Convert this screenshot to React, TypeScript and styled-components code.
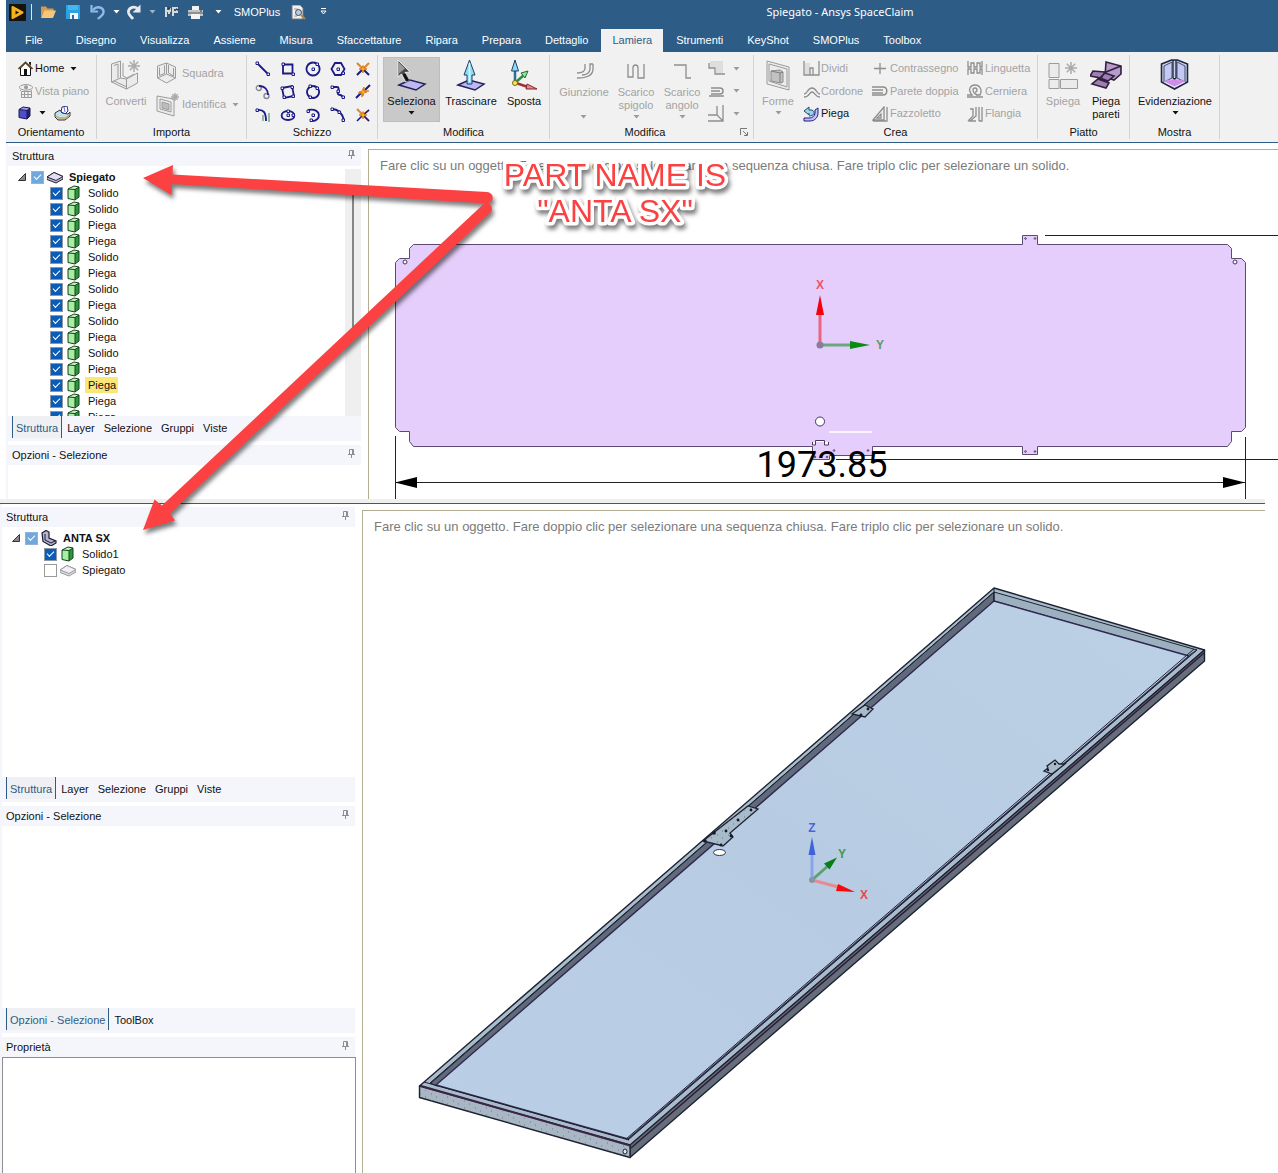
import React from 'react';
import styled, { createGlobalStyle, css } from 'styled-components';

const c = {
  blue: '#2d5c87',
  ribbon: '#f1f1f1',
  band: '#f5f6fc',
  off: '#a3a3a3',
  rule: '#b3ae90',
  navy: '#1c1a86',
};

const GlobalStyle = createGlobalStyle`
  *, *::before, *::after { box-sizing: border-box; }
  body { margin: 0; background: #fff; }
  button { font: inherit; color: inherit; background: none; border: 0; padding: 0; margin: 0; }
  svg { display: block; flex: none; }
`;

/* ---------- frame ---------- */

const Page = styled.div`
  position: relative;
  display: flex;
  flex-direction: column;
  min-height: 100vh;
  overflow: hidden;
  font-family: 'Liberation Sans', Arial, sans-serif;
  font-size: 11px;
  line-height: 13px;
  color: #111;
`;

const TopWindow = styled.section`
  margin-left: 6px;
`;

const BottomWindow = styled.section`
  flex: 1;
  display: flex;
  margin-right: 13px;
  border-top: 1px solid ${c.blue};
`;

const Seam = styled.div`
  height: 4px;
  margin-right: 13px;
  background: #efeff0;
`;

const Body = styled.div`
  display: flex;
  flex: 1;
  min-width: 0;
`;

/* ---------- title bar ---------- */

const TitleBar = styled.header`
  display: flex;
  align-items: center;
  height: 24px;
  background: ${c.blue};
  color: #fff;
`;

const QuickButton = styled.button<{ $w: number }>`
  display: flex;
  align-items: center;
  justify-content: center;
  flex: none;
  width: ${(p) => p.$w}px;
  height: 24px;
`;

const QuickRule = styled.span`
  flex: none;
  width: 1px;
  height: 16px;
  margin: 0 4px 0 3px;
  background: #dfe8f0;
`;

const Title = styled.h1`
  flex: 1;
  margin: 0;
  padding-left: 68px;
  text-align: center;
  font: 400 11px/16px 'Noto Sans', sans-serif;
`;

const TabRow = styled.nav`
  display: flex;
  padding: 5px 0 0 8px;
  background: ${c.blue};
`;

const RibbonTab = styled.button<{ $active?: boolean; $first?: boolean }>`
  height: 23px;
  padding: 0 11px;
  margin-right: ${(p) => (p.$first ? 11 : 2)}px;
  color: ${(p) => (p.$active ? c.blue : '#fff')};
  background: ${(p) => (p.$active ? c.ribbon : 'transparent')};
`;

/* ---------- ribbon ---------- */

const Ribbon = styled.div`
  display: flex;
  padding: 3px 0;
  background: ${c.ribbon};
  border-bottom: 1px solid ${c.blue};
  height: 91px;
`;

const Group = styled.section<{ $w: number }>`
  display: flex;
  flex-direction: column;
  flex: none;
  width: ${(p) => p.$w}px;
  border-right: 1px solid #d2d2d2;
`;

const GroupBody = styled.div<{ $pad?: number }>`
  display: flex;
  height: 70px;
  padding: 2px 0 0 ${(p) => p.$pad ?? 0}px;
`;

const GroupLabel = styled.div`
  display: flex;
  align-items: center;
  height: 14px;
`;

const GroupName = styled.span`
  flex: 1;
  text-align: center;
`;

const Launcher = styled.button`
  margin-right: 5px;
`;

const Tool = styled.button<{ $w: number; $on?: boolean; $off?: boolean; $small?: boolean }>`
  display: flex;
  flex-direction: column;
  align-items: center;
  flex: none;
  width: ${(p) => p.$w}px;
  height: 65px;
  padding-top: 2px;
  gap: ${(p) => (p.$small ? 3 : 4)}px;
  color: ${(p) => (p.$off ? c.off : '#111')};
  ${(p) => p.$on && css`background: #c9c9c9; outline: 1px solid #bdbdbd; outline-offset: -1px;`}
`;

const ToolText = styled.span<{ $small?: boolean }>`
  display: flex;
  flex-direction: column;
  align-items: center;
  min-height: ${(p) => (p.$small ? 26 : 13)}px;
`;

const ToolStack = styled.span`
  display: flex;
  flex-direction: column;
  align-items: center;
  gap: 3px;
`;

const Column = styled.div<{ $w?: number; $lead?: number }>`
  display: flex;
  flex-direction: column;
  flex: none;
  width: ${(p) => (p.$w ? p.$w + 'px' : 'auto')};
  padding-left: ${(p) => p.$lead ?? 0}px;
`;

const RowTool = styled.button<{ $h: number; $off?: boolean; $gap?: number }>`
  display: flex;
  align-items: center;
  gap: ${(p) => p.$gap ?? 2}px;
  height: ${(p) => p.$h}px;
  color: ${(p) => (p.$off ? c.off : '#111')};
  white-space: nowrap;
`;

const CaretSpace = styled.span`
  display: flex;
  margin-left: 4px;
`;

const Pair = styled.div`
  display: flex;
  align-items: center;
  gap: 8px;
`;

const SketchGrid = styled.div`
  display: grid;
  grid-template-columns: repeat(5, 25px);
  grid-auto-rows: 23px;
`;

const SketchButton = styled.button`
  display: grid;
  place-items: center;
`;

/* ---------- side panels ---------- */

const Side = styled.aside`
  display: flex;
  flex-direction: column;
  flex: none;
  width: 355px;
  padding-top: 3px;
  border-left: 2px solid #f5f6fc;
  margin-right: 7px;
`;

const PanelHead = styled.div`
  display: flex;
  align-items: center;
  justify-content: space-between;
  flex: none;
  height: 20px;
  padding: 0 6px 0 4px;
  background: ${c.band};
`;

const PanelName = styled.h2`
  margin: 0;
  font: inherit;
`;

const PinButton = styled.button`
  padding-bottom: 3px;
`;

const TreeArea = styled.div`
  display: flex;
  flex: none;
  height: 250px;
  padding-top: 3px;
  overflow: hidden;
`;

const TreeList = styled.ul`
  flex: 1;
  margin: 0;
  padding: 0;
  list-style: none;
  overflow: hidden;
`;

const TreeRow = styled.li<{ $root?: boolean }>`
  display: flex;
  align-items: center;
  height: 16px;
  padding-left: ${(p) => (p.$root ? 10 : 42)}px;
`;

const Toggle = styled.button`
  width: 13px;
`;

const NodeLabel = styled.label<{ $root?: boolean; $hot?: boolean }>`
  display: flex;
  align-items: center;
  gap: 3px;
  font-weight: ${(p) => (p.$root ? 700 : 400)};
`;

const NodeText = styled.span<{ $hot?: boolean }>`
  padding: 2px 2px 1px 3px;
  background: ${(p) => (p.$hot ? '#fbe67a' : 'transparent')};
`;

const Tick = styled.input<{ $soft?: boolean }>`
  appearance: none;
  display: grid;
  place-items: center;
  width: 13px;
  height: 13px;
  margin: 0;
  border: 1px solid #9a9a9a;
  background: #fff;
  &:checked {
    background: ${(p) => (p.$soft ? '#6fa8dc' : '#0b5cb8')};
    border-color: ${(p) => (p.$soft ? '#8fb4d6' : '#8a98a8')};
  }
  &:checked::after {
    content: '';
    width: 7px;
    height: 4px;
    margin-bottom: 2px;
    border: solid #fff;
    border-width: 0 0 1px 1px;
    transform: rotate(-45deg);
  }
`;

const ScrollTrack = styled.div`
  flex: none;
  width: 16px;
  padding: 24px 7px 0;
  background: #efefef;
`;

const ScrollThumb = styled.div`
  height: 136px;
  background: #868686;
`;

const TabStrip = styled.div`
  display: flex;
  flex: none;
  height: 25px;
  margin-bottom: 4px;
  padding: 0 0 3px 4px;
  background: ${c.band};
`;

const PanelTab = styled.button<{ $active?: boolean }>`
  padding: 2px 4px 0 5px;
  ${(p) =>
    p.$active &&
    css`
      color: ${c.blue};
      background: #eff0f3;
      padding: 2px 3px 0;
      border: solid ${c.blue};
      border-width: 0 1px;
    `}
`;

const PanelSpace = styled.div<{ $h: number }>`
  flex: none;
  height: ${(p) => p.$h}px;
`;

const PropertyBox = styled.div`
  flex: 1;
  margin-right: -1px;
  border: 1px solid #8e8e8e;
  border-bottom: 0;
`;

/* ---------- viewports ---------- */

const Viewport = styled.main`
  display: grid;
  flex: 1;
  min-width: 0;
  margin-top: 6px;
  overflow: hidden;
  border-left: 1px solid ${c.rule};
  border-top: 1px solid ${c.rule};
  & > * { grid-area: 1 / 1; }
`;

const Hint = styled.p`
  margin: 0;
  padding: 8px 11px;
  font-size: 13px;
  line-height: 15px;
  color: #7b7b7b;
  white-space: nowrap;
`;

const Annotation = styled.svg`
  position: absolute;
  left: 0;
  top: 0;
  pointer-events: none;
  filter: drop-shadow(2px 4px 2px rgba(0, 0, 0, 0.5));
`;

/* ---------- icons ---------- */

type IconProps = { w?: number; h?: number; box?: string; children: React.ReactNode };
const Icon = ({ w = 16, h = w, box, children }: IconProps) => (
  <svg width={w} height={h} viewBox={box ?? `0 0 ${w} ${h}`} fill="none" aria-hidden="true">
    {children}
  </svg>
);

const Caret = ({ color = '#111' }: { color?: string }) => (
  <Icon w={7} h={4}><path d="M.5 0h6l-3 3.5z" fill={color} /></Icon>
);

const gray = '#9b9b9b';

const Logo = () => (
  <Icon w={17} h={18}>
    <path d="M0 1h17v17H0z" fill="#17130b" />
    <path d="M3.500 4l10 5.500-10 5.500z" fill="#f6b21b" stroke="#f6b21b" strokeWidth="2" strokeLinejoin="round" />
    <path d="M6.500 7.500l3.500 2-3.500 2z" fill="#17130b" />
  </Icon>
);
const Folder = () => (
  <Icon w={16} h={14}>
    <path d="M1 12V1.500h5l1.500 2h6V6H4z" fill="#d89a45" />
    <path d="M4 5.500h12L13 13H1z" fill="#f7c57c" />
  </Icon>
);
const Save = () => (
  <Icon w={14}>
    <path d="M0 0h14v14H0z" fill="#2aa3e4" />
    <path d="M2 0h10v5H2z" fill="#45b6ee" /><path d="M4 8h8v6H4z" fill="#f4f8fb" /><path d="M6 10h2v4H6z" fill="#2a6fa5" />
  </Icon>
);
const Undo = () => (
  <Icon w={16}>
    <path d="M3 6C7 1 14 3.500 13.500 8.500 13 12 10 12.500 8 15" stroke="#8fb9ec" strokeWidth="2.400" />
    <path d="M1.500 1v6.500H8" stroke="#8fb9ec" strokeWidth="2.200" />
  </Icon>
);
const Redo = () => (
  <Icon w={16}>
    <path d="M12 5C8 1.500 2 3.500 2.500 8.500 3 11.500 5 12.500 7 15" stroke="#e8eaec" strokeWidth="2.800" />
    <path d="M14.500 .5v8h-8z" fill="#e8eaec" />
  </Icon>
);
const Connect = () => (
  <Icon w={15} h={14}>
    <path d="M2 2v10M2 6h4V3M5 6v3M9 11V3h4v4H9" stroke="#d8d8d8" strokeWidth="2" />
    <path d="M4 3l2 1M12 4l2 1" stroke="#333" strokeWidth="1.400" />
  </Icon>
);
const Printer = () => (
  <Icon w={15} h={15}>
    <path d="M4 1h7v5H4z" fill="#f2f2f2" /><path d="M0 5h15v6H0z" fill="#c2c5c8" /><path d="M0 7h15v2H0z" fill="#8c9094" />
    <path d="M3 9h9v5H3z" fill="#f4f4f4" /><path d="M12 6h2" stroke="#333" />
  </Icon>
);
const DocSearch = () => (
  <Icon w={15} h={15}>
    <path d="M1 0h8l3 3v11H1z" fill="#f1f1f1" stroke="#777" />
    <path d="M3 4h4M3 11h3" stroke="#999" />
    <circle cx="7.500" cy="7.500" r="3" fill="#b5cde6" stroke="#44484d" /><path d="M10 10l4 4" stroke="#b8843a" strokeWidth="2" />
  </Icon>
);
const More = () => (
  <Icon w={7} h={8}><path d="M1 .5h5" stroke="#fff" /><path d="M1 3h5L3.500 6z" stroke="#fff" /></Icon>
);
const House = () => (
  <Icon w={15}>
    <path d="M2.500 7v7.500h10V7l-5-5z" fill="#fff" stroke="#111" /><path d="M.5 8L7.500 1.300 14.500 8" stroke="#5d4420" strokeWidth="1.600" />
    <path d="M11 1h2v4l-2-2z" fill="#222" /><path d="M6 8h3v6H6z" fill="#111" />
  </Icon>
);
const PlanView = () => (
  <Icon w={16}>
    <path d="M1 4.500C4 .5 12 .5 15 4.500 12 8 4 8 1 4.500z" stroke={gray} /><circle cx="8" cy="4.300" r="2" fill={gray} />
    <path d="M3.500 8.500h10v6h-10zM3.500 11.500h10M6.500 8.500v6M10 8.500v6M2 7l1 1M14 7l-1 1" stroke={gray} />
  </Icon>
);
const BlueCube = () => (
  <Icon w={13} h={14}>
    <path d="M1 3.500L5 1l7 1-3 2.500z" fill="#9c9be8" /><path d="M1 3.500l8 1V13l-8-1.500z" fill="#4f4dc8" /><path d="M9 4.500L12 2v8l-3 3z" fill="#24226f" />
    <path d="M1 3.500L5 1l7 1v8l-3 3-8-1.500zM1 3.500l8 1L12 2M9 4.500V13" stroke="#1a1859" />
  </Icon>
);
const Orbit = () => (
  <Icon w={17} h={15}>
    <path d="M7 6L8 1l5-1 1 5-3 3z" fill="#fff" stroke="#31318c" /><path d="M10 1l1 5" stroke="#6a6ad0" />
    <path d="M1 7l5-3 2 3 6 1 2-2v4l-5 4H4l-3-3z" fill="#bfe3ef" stroke="#334" /><path d="M2 10l3 2h7l3-3" stroke="#d8a050" strokeWidth="1.300" />
  </Icon>
);
const Burst = ({ x, y, s = 6 }: { x: number; y: number; s?: number }) => (
  <path
    d={`M${x - s} ${y}h${2 * s}M${x} ${y - s}v${2 * s}M${x - s * 0.7} ${y - s * 0.7}l${1.4 * s} ${1.4 * s}M${x + s * 0.7} ${y - s * 0.7}l${-1.4 * s} ${1.4 * s}`}
    stroke="#ababab" strokeWidth="1.500"
  />
);
const Convert = () => (
  <Icon w={32}>
    <path d="M1.500 5l9-3v17l-9 4zM1.500 23l15 7 11-6V14l-11 6-6-1" fill="#ebebeb" stroke={gray} />
    <path d="M4 6.500l4-1.500v14M16.500 20v10M4 22l12 5.500M13 4v13l4 2 7-4" stroke={gray} />
    <Burst x={24} y={7} />
  </Icon>
);
const Bracket = () => (
  <Icon w={22}>
    <path d="M1.500 4l9-3 9 4v11l-9 5-9-5z" fill="#ececec" stroke={gray} /><path d="M10.500 1v11l9 4M10.500 12l-9 4M12.500 3v8l5 3V6M3.500 5.500v8l5-2V3.500" stroke={gray} />
  </Icon>
);
const Identify = () => (
  <Icon w={24} h={25}>
    <path d="M1 4l17 3v17L1 19z" fill="#ededed" stroke={gray} /><path d="M4 7l11 3v10L4 17z" stroke={gray} /><path d="M6 10l7 2v6l-7-2z" fill="#bdbdbd" stroke={gray} />
    <Burst x={19} y={5} s={4} />
  </Icon>
);

const dot = (x: number, y: number) => <path key={`${x}-${y}`} d={`M${x - 1} ${y - 1}h2.500v2.500h-2.500z`} fill="#f4f4ff" stroke={c.navy} />;
const N = ({ d, pts = [], dash }: { d: string; pts?: number[][]; dash?: string }) => (
  <Icon w={16}>
    <path d={d} stroke={c.navy} strokeWidth="1.800" strokeDasharray={dash} />
    {pts.map(([x, y]) => dot(x, y))}
  </Icon>
);
const Cross = ({ v }: { v: number }) => (
  <Icon w={16}>
    {v === 0 && <><path d="M2 2l5 5M14 2L9 7" stroke="#e0852c" strokeWidth="2" /><path d="M2 14l6-6 6 6" stroke={c.navy} strokeWidth="2" /></>}
    {v === 1 && <><path d="M1 14l5-5M10 6l5-5" stroke={c.navy} strokeWidth="2" /><path d="M3 9h4v4M9 3v4h5" stroke="#e0852c" strokeWidth="1.600" /></>}
    {v === 2 && <><path d="M2 2l12 12M14 3L8 8" stroke="#e0852c" strokeWidth="2" /><path d="M2 14l6-6M9 9l5 5M8 8l6-5" stroke={c.navy} strokeWidth="1.600" /></>}
    <path d="M8 4.500l1 2.500 3 1-3 1-1 3-1-3-3-1 3-1z" fill="#ffb400" stroke="#c55a11" strokeWidth=".6" />
  </Icon>
);
const sketchIcons = [
  <N d="M2 2l12 12" pts={[[2, 2], [13, 13]]} />,
  <N d="M3 3.500h9.500v9H3z" pts={[[3, 3], [13, 13]]} />,
  <N d="M8 1.500a6.500 6.500 0 1 0 .1 0" pts={[[8, 8], [12, 3]]} />,
  <N d="M5 2h6l3.500 6L11 14H5L1.500 8z" pts={[[8, 8], [13, 12]]} />,
  <Cross v={0} />,
  <Icon w={16}><circle cx="3.800" cy="4" r="2.500" stroke="#8a8a96" strokeWidth="1.400" /><circle cx="11.500" cy="12" r="2.500" stroke="#8a8a96" strokeWidth="1.400" /><path d="M4 2c6 0 9 4 9 9" stroke={c.navy} strokeWidth="1.800" /></Icon>,
  <N d="M2 4l10-2 2 10-10 2z" pts={[[2, 4], [12, 3], [4, 13], [13, 12]]} />,
  <N d="M8 2a6 6 0 1 0 .1 0" pts={[[5, 2], [12, 4], [5, 13]]} />,
  <N d="M2 3h5c2 0 2 2 1 4s0 4 2 4 2 2 4 2" pts={[[2, 3], [8, 7], [13, 13]]} />,
  <Cross v={1} />,
  <Icon w={16}><path d="M2 3c7-1 9 3 9 11" stroke={c.navy} strokeWidth="1.800" />{dot(2, 3)}<path d="M14 6v9M8 8v6" stroke="#6da08a" strokeWidth="1.400" /></Icon>,
  <N d="M8 4c8.500 0 8.500 9 0 9s-8.500-9 0-9" pts={[[8, 8], [13, 8], [8, 4]]} />,
  <N d="M3 3c14-3 14 12 3 11" pts={[[3, 4], [8, 8], [6, 13]]} />,
  <N d="M2 2c7 0 10 4 12 11" pts={[[2, 2], [9, 5], [13, 13]]} />,
  <Cross v={2} />,
];

const Plate = () => (
  <path d="M3 26l11-5 15 4-9 6z" fill="#bdb9f0" stroke="#23215f" strokeWidth="1.500" />
);
const SelectIcon = () => (
  <Icon w={32}>
    <Plate />
    <path d="M2 1l12 12-5 .5 4 8-3.500 1.500-4-8L2 18z" fill="#4a4a4a" stroke="#e9e9e9" /><path d="M3 3.500l6 6-6 5z" fill="#9b9b9b" /><path d="M8 15l4 7" stroke="#111" strokeWidth="3" />
  </Icon>
);
const PullIcon = () => (
  <Icon w={32}><Plate /><path d="M14.500 1L9 16h3v9h5v-9h3z" fill="#8edcf0" stroke="#1d3f6e" /><path d="M14.500 4v19" stroke="#d9f7ff" strokeWidth="1.500" /></Icon>
);
const MoveIcon = () => (
  <Icon w={32}>
    <path d="M7 24V10" stroke="#2a6f94" strokeWidth="2.500" /><path d="M7 1L3.500 12h7z" fill="#8edcf0" stroke="#1d3f6e" />
    <path d="M8 23l8-7" stroke="#2f8a3f" strokeWidth="2.500" /><path d="M20 12l-7 2 4 5z" fill="#8fe6a0" stroke="#206b30" />
    <path d="M8 24l12 4" stroke="#a03038" strokeWidth="2.500" /><path d="M29 30l-10-5-1 5z" fill="#e98a90" stroke="#80252c" />
    <circle cx="7" cy="24" r="2.500" fill="#ffe45c" stroke="#7a6a10" />
  </Icon>
);
const G = ({ d, w = 16, h = w, sw = 1.3, fill }: { d: string; w?: number; h?: number; sw?: number; fill?: string }) => (
  <Icon w={w} h={h}>{fill && <path d={fill} fill="#dedede" />}<path d={d} stroke="#8e8e8e" strokeWidth={sw} /></Icon>
);
const Shapes = () => (
  <Icon w={24} h={32}>
    <path d="M1 2l22 6v23L1 25z" fill="#ececec" stroke={gray} /><path d="M3 5l18 5v18L3 22z" stroke={gray} /><path d="M5 12l9-1 3 2v10l-2 1-10-2z" fill="#c2c2c2" stroke="#8b8b8b" /><path d="M5 12l9 2v10M14 14l3-1" stroke="#7d7d7d" />
  </Icon>
);
const Unfold = () => (
  <Icon w={32}>
    <path d="M2 4.500h10v14H2zM2 20.500h10v9H2zM13.500 20.500h17v9h-17z" fill="#ebebeb" stroke={gray} /><Burst x={24} y={9} />
  </Icon>
);
const FoldWalls = () => (
  <Icon w={32}>
    <path d="M16 3l15 4v8l-7 6-9-3z" fill="#b79ccb" stroke="#33203f" strokeWidth="1.600" />
    <path d="M16 13l15-6M15 13l-12-1-3 5 11 2zM15 14l9 3-6 5-8-3zM8 20l11 4-3 5-14-4z" fill="#9c80b3" stroke="#33203f" strokeWidth="1.600" />
  </Icon>
);
const Highlight = () => (
  <Icon w={32}>
    <path d="M2.500 5l10-4h6l10 4v18l-13 7-13-7z" fill="#cfcdf6" stroke="#202838" strokeWidth="1.600" />
    <path d="M5 7l8-4v16l-8 4zM26 7l-8-4v16l8 4z" fill="#c4c8f4" stroke="#3b5560" /><path d="M5 22.500l4-2 3 1 3.500-2 3.500 2 3-1 4 2-10.500 5z" fill="#cf8dea" />
    <path d="M14 1v18l1.500 1 1.500-1V1" stroke="#202838" strokeWidth="1.300" /><path d="M5 23l10.500 5L26 23" stroke="#eadcff" />
  </Icon>
);
const FoldIcon = () => (
  <Icon w={16}>
    <path d="M1 15h6c5 0 8-4 8-8V2l-3 2v3c0 3-3 5-5 5H1z" fill="#c5c3f6" stroke={c.navy} /><path d="M6 10c5 0 7-4 3-6H6V1L1 5l5 4V7" fill="#9ed4ea" stroke="#1d4d6e" />
  </Icon>
);
const LaunchIcon = () => (
  <Icon w={8}><path d="M.5 7V.5H7M3 3l4 4M7.500 4v3.500H4" stroke="#777" /></Icon>
);
const Pin = () => (
  <Icon w={7} h={9}><path d="M1.500 5.500v-5h4v5M0 5.500h7M3.500 5.500V9M4.500 1v4" stroke="#8d8d93" /></Icon>
);
const Solid = () => (
  <Icon w={16}>
    <path d="M2 4L8 1l5 1-4 2.500z" fill="#c9f7c4" /><path d="M2 4l7 .5v10.500l-7-1.500z" fill="#a5efa0" /><path d="M9 4.500L13 2v10l-4 3z" fill="#2e9440" />
    <path d="M2 4l6-3 5 1v10l-4 3-7-1.500zM2 4l7 .5L13 2M9 4.500V15" stroke="#14431b" />
  </Icon>
);
const Sheet = ({ muted }: { muted?: boolean }) => (
  <Icon w={16}>
    <path d="M0 8l7-4.500 9 4v2.500l-7 4-9-3.500z" fill={muted ? '#dcdce0' : '#b9b4cf'} stroke={muted ? '#97979c' : '#262236'} />
    <path d="M0 8l7-4.500 9 4-7 4z" fill={muted ? '#f1f1f3' : '#e3def4'} stroke={muted ? '#97979c' : '#262236'} />
  </Icon>
);
const SheetPart = () => (
  <Icon w={16}>
    <path d="M1 3l4-2.500L8 2v6l7 3v2l-5 3-8-4.500z" fill="#b5b4d0" stroke="#1d1c30" strokeWidth="1.200" /><path d="M4 4v6l6 3 4-2" stroke="#1d1c30" />
  </Icon>
);
const Expanded = () => <Icon w={8}><path d="M7.500 .5v7h-7z" fill="#8a8a8a" stroke="#333" /></Icon>;

/* ---------- composed parts ---------- */

const BigTool = ({ w, icon, lines, on, off, small, caret }: {
  w: number; icon: React.ReactNode; lines: string[]; on?: boolean; off?: boolean; small?: boolean; caret?: boolean;
}) => (
  <Tool $w={w} $on={on} $off={off} $small={small}>
    {icon}
    <ToolStack>
      <ToolText $small={small}>{lines.map((l) => <span key={l}>{l}</span>)}</ToolText>
      {caret && <Caret color={off ? gray : '#111'} />}
    </ToolStack>
  </Tool>
);

const RibbonGroup = ({ w, name, pad, launcher, children }: {
  w: number; name: string; pad?: number; launcher?: boolean; children: React.ReactNode;
}) => (
  <Group $w={w} aria-label={name}>
    <GroupBody $pad={pad}>{children}</GroupBody>
    <GroupLabel>
      <GroupName>{name}</GroupName>
      {launcher && <Launcher aria-label="Opzioni modifica"><LaunchIcon /></Launcher>}
    </GroupLabel>
  </Group>
);

const Head = ({ name }: { name: string }) => (
  <PanelHead>
    <PanelName>{name}</PanelName>
    <PinButton aria-label="Blocca pannello"><Pin /></PinButton>
  </PanelHead>
);

const Tabs = ({ names }: { names: string[] }) => (
  <TabStrip>
    {names.map((n, i) => <PanelTab key={n} $active={i === 0}>{n}</PanelTab>)}
  </TabStrip>
);

type NodeProps = { id: string; text: string; icon: React.ReactNode; root?: boolean; hot?: boolean; checked?: boolean };
const TreeNode = ({ id, text, icon, root, hot, checked = true }: NodeProps) => (
  <TreeRow $root={root}>
    {root && <Toggle aria-label="Comprimi"><Expanded /></Toggle>}
    <NodeLabel htmlFor={id} $root={root}>
      <Tick id={id} type="checkbox" defaultChecked={checked} $soft={root} />
      {icon}
      <NodeText $hot={hot}>{text}</NodeText>
    </NodeLabel>
  </TreeRow>
);

const ribbonTabs = ['File', 'Disegno', 'Visualizza', 'Assieme', 'Misura', 'Sfaccettature', 'Ripara', 'Prepara', 'Dettaglio', 'Lamiera', 'Strumenti', 'KeyShot', 'SMOPlus', 'Toolbox'];
const flatBodies = ['Solido', 'Solido', 'Piega', 'Piega', 'Solido', 'Piega', 'Solido', 'Piega', 'Solido', 'Piega', 'Solido', 'Piega', 'Piega', 'Piega', 'Piega'];
const panelTabs = ['Struttura', 'Layer', 'Selezione', 'Gruppi', 'Viste'];
const hint = 'Fare clic su un oggetto. Fare doppio clic per selezionare una sequenza chiusa. Fare triplo clic per selezionare un solido.';

/* ---------- drawings ---------- */

const AxisLabel = ({ x, y, fill, children }: { x: number; y: number; fill: string; children: string }) => (
  <text x={x} y={y} fill={fill} fontSize="12" fontWeight="700" textAnchor="middle">{children}</text>
);

const FlatPattern = () => (
  <svg width="910" height="349" viewBox="369 150 910 349" fill="none" aria-label="Sviluppo piano">
    <path
      d="M413.500 244.500H1022.500V235.500H1037.500V244.500H1227.500L1231.500 248.500V258.500H1241.500L1245.500 262.500V427.500L1241.500 431.500H1231.500V441.500L1227.500 446.500H1037.500V454.500H1022.500V446.500H872.500V455.500H829.500V459.500H812.500V446.500H413.500L409.500 441.500V431.500H399.500L395.500 427.500V262.500L399.500 258.500H409.500V248.500z"
      fill="#e5cefb" stroke="#5d4a72"
    />
    <g stroke="#443456" fill="#fff">
      <circle cx="405" cy="262" r="2" /><circle cx="1235" cy="262" r="2" />
      <circle cx="820" cy="421.500" r="4.500" />
    </g>
    <g stroke="#4a3a5c">
      <circle cx="1025.500" cy="238.500" r=".8" /><circle cx="1035" cy="238.500" r=".8" /><circle cx="1025.500" cy="451.500" r=".8" /><circle cx="1035" cy="451.500" r=".8" />
      <circle cx="834" cy="450.500" r=".8" /><circle cx="868" cy="450.500" r=".8" /><circle cx="815" cy="457" r=".8" /><circle cx="827" cy="457" r=".8" />
      <path d="M812.500 442v3h3v-4.500h9v4.500h4v-3" fill="#fff" />
    </g>
    <path d="M829 432h43" stroke="#fbf3ff" strokeWidth="2" />
    <g stroke="#222">
      <path d="M1045 235.500H1279M836 459.500H1279M395.500 436V499M1245.500 437V499M396 482.500H1245" />
    </g>
    <path d="M395 482.500l22-5.500v11zM1245 482.500l-22-5.500v11z" fill="#000" />
    <text x="822" y="477" fontSize="36" fill="#000" fontFamily="Roboto, sans-serif" textAnchor="middle">1973.85</text>
    <path d="M820 345V314" stroke="#ea6680" strokeWidth="3" /><path d="M820 295l4 20h-8z" fill="#f5000c" />
    <path d="M820 345H852" stroke="#6aa77f" strokeWidth="3" /><path d="M870 345l-20-4v8z" fill="#0b8a16" />
    <circle cx="820" cy="345" r="3.500" fill="#8a7c9a" />
    <AxisLabel x={820} y={289} fill="#f0506a">X</AxisLabel>
    <AxisLabel x={880} y={349} fill="#5a9a6a">Y</AxisLabel>
  </svg>
);

const FoldedPanel = () => (
  <svg width="902" height="662" viewBox="363 511 902 662" fill="none" aria-label="Modello 3D">
    <defs>
      <linearGradient id="floor" x1="0" y1="1" x2="1" y2="0">
        <stop offset="0" stopColor="#bacfe5" /><stop offset=".5" stopColor="#b7cce2" /><stop offset="1" stopColor="#bcd0e5" />
      </linearGradient>
      <pattern id="speckle" width="11" height="7" patternUnits="userSpaceOnUse">
        <path d="M2 2h1M7 5h1" stroke="#68758a" />
      </pattern>
    </defs>
    <g stroke="#1d2231" strokeLinejoin="round">
      <path d="M994 588L1204.500 650 630 1146 419.500 1086z" fill="#a9bccc" strokeWidth="1.400" />
      <path d="M994 592L430 1083l7 3L994 602z" fill="#616a7a" strokeWidth="1" />
      <path d="M994 592L1197 650l-9 6L994 601z" fill="#9db0c0" />
      <path d="M994 601L1189 656 628 1139 436 1085z" fill="url(#floor)" stroke="#2f2850" strokeWidth="1.400" />
      <path d="M1197 650L628 1140M994 592L431 1083M994 588V602" />
      <path d="M424 1082L629 1140M1194 649L626 1139" />
      <path d="M1204.500 650V661L630 1157.500V1145z" fill="#666e7b" strokeWidth="1.400" />
      <path d="M1204 653L631 1148" stroke="#2c1c3c" strokeWidth="1.500" />
      <path d="M419.500 1086V1097.500L630 1157.500V1145z" fill="#a9b6c4" strokeWidth="1.400" />
      <path d="M419.500 1088V1097.500L630 1157.500V1147z" fill="url(#speckle)" stroke="none" />
      <path d="M421 1086L630 1145.500" stroke="#3c2546" strokeWidth="2" />
      <ellipse cx="625" cy="1151.500" rx="2" ry="2.500" fill="#dfe7ee" />
    </g>
    <g stroke="#1d2231" fill="#a8bbca" strokeWidth="1.300">
      <path d="M748 806l10 3-28 24 3 4-10 9-20-5z" />
      <path d="M865 705l8 4-8 8-13-3z" />
      <path d="M1052 774l-8-3 4-3-1-2 8-6 4 4 6 0z" />
    </g>
    <path d="M748 806l10 3-28 24 3 4-10 9-20-5z" fill="url(#speckle)" />
    <g fill="#151a26">
      <circle cx="751" cy="810" r="1.400" /><circle cx="738" cy="820" r="1.400" /><circle cx="726" cy="831" r="1.400" /><circle cx="714" cy="833" r="1.800" />
      <circle cx="705" cy="841" r="1.800" /><circle cx="721" cy="845" r="1.400" /><circle cx="731" cy="836" r="1.400" /><circle cx="861" cy="715" r="1.400" /><circle cx="868" cy="709" r="1.400" />
      <circle cx="1048" cy="770" r="1.200" /><circle cx="1055" cy="764" r="1.200" />
    </g>
    <ellipse cx="719.500" cy="852.500" rx="6" ry="3" fill="#fff" stroke="#2b3246" />
    <path d="M812 880V854" stroke="#8ba3ea" strokeWidth="3" /><path d="M812 837l3.500 18h-7z" fill="#3d63dd" />
    <path d="M812 880L829 865" stroke="#5ba36e" strokeWidth="3" /><path d="M837 857.500l-7.500 12-5.500-6z" fill="#0b7d18" />
    <path d="M812 880l26 7" stroke="#e98a92" strokeWidth="3" /><path d="M855 892l-19-1 2-7z" fill="#f80808" />
    <circle cx="812" cy="880" r="3" fill="#8a94a0" />
    <AxisLabel x={812} y={832} fill="#4a63e0">Z</AxisLabel>
    <AxisLabel x={842} y={858} fill="#3f9a50">Y</AxisLabel>
    <AxisLabel x={864} y={899} fill="#ee4450">X</AxisLabel>
  </svg>
);

const Callout = () => (
  <Annotation width="760" height="560" viewBox="0 0 760 560" aria-label="Annotazione">
    <path d="M143 178L173 165 172.500 174.500 487 192a5.500 5.500 0 0 1 0 11.500L172 184 171.500 195z" fill="#fb4141" />
    <path d="M143 530L154.500 499.500 162 505.500 483 204.500a5.500 5.500 0 0 1 7.500 8L170 513.500 175 520.500z" fill="#fb4141" />
    <g fontSize="32" textAnchor="middle" fill="#fb4141" stroke="#fff" strokeWidth="7" strokeLinejoin="round" paintOrder="stroke">
      <text x="615" y="186">PART NAME IS</text>
      <text x="615" y="222">"ANTA SX"</text>
    </g>
  </Annotation>
);

/* ---------- page ---------- */

export default function App() {
  return (
    <Page>
      <GlobalStyle />
      <TopWindow>
        <TitleBar>
          <QuickButton $w={22} aria-label="SpaceClaim"><Logo /></QuickButton>
          <QuickRule />
          <QuickButton $w={24} aria-label="Apri"><Folder /></QuickButton>
          <QuickButton $w={26} aria-label="Salva"><Save /></QuickButton>
          <QuickButton $w={24} aria-label="Annulla"><Undo /></QuickButton>
          <QuickButton $w={12} aria-label="Elenco annulla"><Caret color="#fff" /></QuickButton>
          <QuickButton $w={24} aria-label="Ripeti"><Redo /></QuickButton>
          <QuickButton $w={12} aria-label="Elenco ripeti"><Caret color="#9fb4c8" /></QuickButton>
          <QuickButton $w={26} aria-label="Collega"><Connect /></QuickButton>
          <QuickButton $w={22} aria-label="Stampa"><Printer /></QuickButton>
          <QuickButton $w={24} aria-label="Elenco stampa"><Caret color="#fff" /></QuickButton>
          <QuickButton $w={54}>SMOPlus</QuickButton>
          <QuickButton $w={28} aria-label="Anteprima"><DocSearch /></QuickButton>
          <QuickButton $w={22} aria-label="Personalizza"><More /></QuickButton>
          <Title>Spiegato - Ansys SpaceClaim</Title>
        </TitleBar>
        <TabRow>
          {ribbonTabs.map((t, i) => <RibbonTab key={t} $first={i === 0} $active={t === 'Lamiera'}>{t}</RibbonTab>)}
        </TabRow>

        <Ribbon>
          <RibbonGroup w={91} name="Orientamento" pad={12}>
            <Column>
              <RowTool $h={23}><House />Home<CaretSpace><Caret /></CaretSpace></RowTool>
              <RowTool $h={22} $off $gap={1}><PlanView />Vista piano</RowTool>
              <Pair>
                <RowTool $h={22} $gap={8} aria-label="Vista"><BlueCube /><Caret /></RowTool>
                <RowTool $h={22} aria-label="Ruota"><Orbit /></RowTool>
              </Pair>
            </Column>
          </RibbonGroup>

          <RibbonGroup w={150} name="Importa" pad={4}>
            <BigTool w={50} off icon={<Convert />} lines={['Converti']} />
            <Column $lead={5}>
              <RowTool $h={32} $off $gap={4}><Bracket />Squadra</RowTool>
              <RowTool $h={31} $off><Identify />Identifica<CaretSpace><Caret color={gray} /></CaretSpace></RowTool>
            </Column>
          </RibbonGroup>

          <RibbonGroup w={131} name="Schizzo" pad={3}>
            <SketchGrid>
              {sketchIcons.map((ic, i) => <SketchButton key={i} aria-label={`Schizzo ${i + 1}`}>{ic}</SketchButton>)}
            </SketchGrid>
          </RibbonGroup>

          <RibbonGroup w={172} name="Modifica" pad={5}>
            <BigTool w={57} on icon={<SelectIcon />} lines={['Seleziona']} caret />
            <BigTool w={62} icon={<PullIcon />} lines={['Trascinare']} />
            <BigTool w={44} icon={<MoveIcon />} lines={['Sposta']} />
          </RibbonGroup>

          <RibbonGroup w={204} name="Modifica" pad={6} launcher>
            <BigTool w={56} off small caret lines={['Giunzione']}
              icon={<G w={24} d="M13 5v4c0 3-3 5-8 5M21 5v5c0 6-6 9-16 9M21 5h-3v5c0 4-4 6-8 6" />} />
            <BigTool w={48} off small caret lines={['Scarico', 'spigolo']}
              icon={<G w={24} d="M4 5v13h5V9c0-4 5-4 5 0v10h6V5" />} />
            <BigTool w={44} off small caret lines={['Scarico', 'angolo']}
              icon={<G w={24} d="M4 6h12v13h5M16 6v13" />} />
            <Column $lead={4}>
              <RowTool $h={23} $off $gap={8} aria-label="Angolo"><G w={17} d="M1 3v5h6v6h10" fill="M2 1h13v12H8V7H2z" /><Caret color={gray} /></RowTool>
              <RowTool $h={22} $off $gap={8} aria-label="Orlo"><G w={17} d="M1 13h15M3 11h9c4 0 4-6 0-6H3M3 8h9" sw={1.5} /><Caret color={gray} /></RowTool>
              <RowTool $h={23} $off $gap={8} aria-label="Smusso"><G w={17} d="M9 1v9H0M15 0v16H0M9 10l6 6" /><Caret color={gray} /></RowTool>
            </Column>
          </RibbonGroup>

          <RibbonGroup w={284} name="Crea" pad={5}>
            <BigTool w={38} off caret icon={<Shapes />} lines={['Forme']} />
            <Column $w={75} $lead={6}>
              <RowTool $h={23} $off $gap={1}><G w={17} d="M1 1v14h15V1M7 15V8h3v7" fill="M2 3h5v11H2z" />Dividi</RowTool>
              <RowTool $h={23} $off $gap={1}><G w={17} d="M1 11c4 0 3-6 8-6s4 6 8 6M1 14c6 0 5-5 8-5s3 5 8 5" />Cordone</RowTool>
              <RowTool $h={23} $gap={2}><FoldIcon />Piega</RowTool>
            </Column>
            <Column $w={95}>
              <RowTool $h={23} $off><G d="M8 3v11M2 8.500h12" />Contrassegno</RowTool>
              <RowTool $h={23} $off><G d="M0 4h11c5 0 5 8 0 8H0M0 7h11M0 10h11" sw={1.5} />Parete doppia</RowTool>
              <RowTool $h={23} $off><G d="M1 14L12 1v13zM15 1v14H1M9 8v4H5z" />Fazzoletto</RowTool>
            </Column>
            <Column>
              <RowTool $h={23} $off><G d="M1 1v6h3V3h3v4h3V3h3v4h2V1M1 15V9h3v4h3V9h3v4h3V9h2v6" />Linguetta</RowTool>
              <RowTool $h={23} $off><G d="M0 14h16M0 12h5C0 6 4 2 8 2s8 4 5 10H9M8 9a2 2 0 1 0-2-2c0 3 3 5 6 5" />Cerniera</RowTool>
              <RowTool $h={23} $off><G d="M1 15l5-5V3H3M9 1v9l-6 5h6M12 1v14M15 1v14h-3" />Flangia</RowTool>
            </Column>
          </RibbonGroup>

          <RibbonGroup w={92} name="Piatto" pad={4}>
            <BigTool w={42} off icon={<Unfold />} lines={['Spiega']} />
            <BigTool w={44} icon={<FoldWalls />} lines={['Piega', 'pareti']} />
          </RibbonGroup>

          <RibbonGroup w={90} name="Mostra" pad={5}>
            <BigTool w={80} icon={<Highlight />} lines={['Evidenziazione']} caret />
          </RibbonGroup>
        </Ribbon>

        <Body>
          <Side>
            <Head name="Struttura" />
            <TreeArea>
              <TreeList>
                <TreeNode id="flat-root" root text="Spiegato" icon={<Sheet />} />
                {flatBodies.map((t, i) => <TreeNode key={i} id={`flat-${i}`} text={t} icon={<Solid />} hot={i === 12} />)}
              </TreeList>
              <ScrollTrack><ScrollThumb /></ScrollTrack>
            </TreeArea>
            <Tabs names={panelTabs} />
            <Head name="Opzioni - Selezione" />
            <PanelSpace $h={34} />
          </Side>
          <Viewport as="div">
            <Hint>{hint}</Hint>
            <FlatPattern />
          </Viewport>
        </Body>
      </TopWindow>

      <Seam />

      <BottomWindow>
        <Body>
          <Side>
            <Head name="Struttura" />
            <TreeArea>
              <TreeList>
                <TreeNode id="part-root" root text="ANTA SX" icon={<SheetPart />} />
                <TreeNode id="part-1" text="Solido1" icon={<Solid />} />
                <TreeNode id="part-2" text="Spiegato" icon={<Sheet muted />} checked={false} />
              </TreeList>
            </TreeArea>
            <Tabs names={panelTabs} />
            <Head name="Opzioni - Selezione" />
            <PanelSpace $h={182} />
            <Tabs names={['Opzioni - Selezione', 'ToolBox']} />
            <Head name="Proprietà" />
            <PropertyBox />
          </Side>
          <Viewport>
            <Hint>{hint}</Hint>
            <FoldedPanel />
          </Viewport>
        </Body>
      </BottomWindow>

      <Callout />
    </Page>
  );
}
